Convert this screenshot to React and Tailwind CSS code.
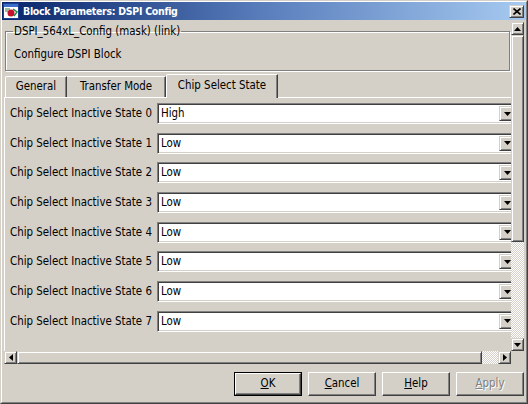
import React from "react";

const rows = ["High", "Low", "Low", "Low", "Low", "Low", "Low", "Low"];

function DownArrow() {
  return (
    <svg width="7" height="4" viewBox="0 0 7 4" className="block">
      <path d="M0 0h7L3.5 4z" fill="#000" />
    </svg>
  );
}
function UpArrow() {
  return (
    <svg width="7" height="4" viewBox="0 0 7 4" className="block">
      <path d="M0 4h7L3.5 0z" fill="#000" />
    </svg>
  );
}
function LeftArrow() {
  return (
    <svg width="4" height="7" viewBox="0 0 4 7" className="block">
      <path d="M4 0v7L0 3.5z" fill="#000" />
    </svg>
  );
}
function RightArrow() {
  return (
    <svg width="4" height="7" viewBox="0 0 4 7" className="block">
      <path d="M0 0v7L4 3.5z" fill="#000" />
    </svg>
  );
}

function ArrowBtn({ children, className = "" }) {
  return (
    <div
      className={
        "flex items-center justify-center bg-[#d4d0c8] border border-t-[#d4d0c8] border-l-[#d4d0c8] border-r-[#404040] border-b-[#404040] shadow-[inset_1px_1px_0_#ffffff,inset_-1px_-1px_0_#808080] " +
        className
      }
    >
      {children}
    </div>
  );
}

function Row({ label, value }) {
  return (
    <div className="flex items-center h-[21px]">
      <div className="w-[147px] shrink-0 whitespace-nowrap">{label}</div>
      <div className="flex-1 h-[21px] flex bg-white border border-t-[#808080] border-l-[#808080] border-b-white border-r-white shadow-[inset_1px_1px_0_#404040,inset_-1px_-1px_0_#d4d0c8] p-[2px]">
        <div className="flex-1 pl-[1px] leading-[15px]">{value}</div>
        <ArrowBtn className="w-[16px] h-[15px]">
          <DownArrow />
        </ArrowBtn>
      </div>
    </div>
  );
}

function Button({ children, def, disabled }) {
  return (
    <div className={"w-[68px] h-[24px] " + (def ? "border border-black" : "")}>
      <div
        className={
          "w-full h-full flex items-center justify-center bg-[#d4d0c8] border border-t-white border-l-white border-r-[#404040] border-b-[#404040] shadow-[inset_-1px_-1px_0_#808080] " +
          (disabled ? "text-[#808080] [text-shadow:1px_1px_0_#ffffff]" : "text-black")
        }
      >
        {children}
      </div>
    </div>
  );
}

export default function App() {
  return (
    <div className="w-[528px] h-[404px] bg-[#d4d0c8] border border-t-[#d4d0c8] border-l-[#d4d0c8] border-b-[#404040] border-r-[#404040] font-['DejaVu_Sans_Condensed','DejaVu_Sans',sans-serif] text-[11.4px] text-black overflow-hidden">
      <div className="h-full border border-t-white border-l-white border-b-[#808080] border-r-[#808080] flex flex-col">
        {/* Title bar */}
        <div className="h-[18px] flex items-center bg-gradient-to-r from-[#0a246a] via-[#5a7ebc] to-[#a6caf0]">
          <svg width="16" height="16" viewBox="0 0 16 16" className="ml-[1px] shrink-0">
            <rect x="0.5" y="0.5" width="15" height="15" fill="#ffffff" stroke="#1c3f94" />
            <rect x="1" y="1" width="14" height="3" fill="#3a6ec8" />
            <path d="M2 6h5M2 8h3" stroke="#2f7d3a" strokeWidth="1" />
            <circle cx="8" cy="10" r="3.5" fill="#c8102e" />
            <path d="M10 6l4 3-3 4" stroke="#1f8f3a" strokeWidth="1.5" fill="none" />
          </svg>
          <div className="ml-[4px] flex-1 text-white font-bold text-[10.5px] tracking-[-0.3px] whitespace-nowrap leading-[18px]">
            Block Parameters: DSPI Config
          </div>
          <ArrowBtn className="w-[15px] h-[13px] mr-[2px]">
            <svg width="8" height="7" viewBox="0 0 8 7" className="block">
              <path d="M0.5 0.5l7 6M7.5 0.5l-7 6" stroke="#000" strokeWidth="1.6" />
            </svg>
          </ArrowBtn>
        </div>

        {/* Content */}
        <div className="mx-[2px] mt-[1px] flex flex-col h-[343px]">
          <div className="flex h-[330px]">
            {/* viewport */}
            <div className="w-[507px] h-full overflow-hidden">
              <fieldset className="ml-[1px] mr-[1px] mt-[3px] border border-[#808080] shadow-[inset_1px_1px_0_#ffffff,1px_1px_0_#ffffff] h-[47px] px-0 pb-0">
                <legend className="ml-[7px] px-[1px] leading-[14px]">DSPI_564xL_Config (mask) (link)</legend>
                <div className="pl-[8px] pt-[9px] leading-[14px]">Configure DSPI Block</div>
              </fieldset>

              {/* tabs */}
              <div className="mt-[2px] ml-[1px] flex items-end h-[24px]">
                <div className="h-[21px] w-[62px] flex items-center justify-center border-t border-l border-t-white border-l-white border-r border-r-[#404040] shadow-[inset_-1px_0_0_#808080] rounded-tl-[2px] pb-[1px]">
                  General
                </div>
                <div className="h-[21px] w-[99px] flex items-center justify-center border-t border-t-white border-r border-r-[#404040] shadow-[inset_-1px_0_0_#808080] pb-[1px]">
                  Transfer Mode
                </div>
                <div className="h-[24px] w-[112px] -mb-[1px] relative z-10 bg-[#d4d0c8] flex items-center justify-center border-t border-l border-t-white border-l-white border-r border-r-[#404040] shadow-[inset_-1px_0_0_#808080] rounded-tl-[2px] pb-[2px]">
                  Chip Select State
                </div>
              </div>
              {/* panel */}
              <div className="w-[516px] h-[260px] border-t border-l border-t-white border-l-white pl-[5px] pr-[2px] pt-[5px] flex flex-col gap-[8.7px]">
                {rows.map((v, i) => (
                  <Row key={i} label={`Chip Select Inactive State ${i}`} value={v} />
                ))}
              </div>
            </div>
            {/* vertical scrollbar */}
            <div className="w-[13px] h-full flex flex-col pt-[1px]">
              <ArrowBtn className="h-[13px] w-[13px]">
                <UpArrow />
              </ArrowBtn>
              <ArrowBtn className="h-[207px] w-[13px]" />
              <div className="flex-1 bg-[repeating-conic-gradient(#ffffff_0%_25%,#d4d0c8_0%_50%)] bg-[length:2px_2px]" />
              <ArrowBtn className="h-[13px] w-[13px]">
                <DownArrow />
              </ArrowBtn>
            </div>
          </div>
          <div className="flex h-[13px]">
            <div className="w-[507px] flex">
              <ArrowBtn className="h-[13px] w-[13px]">
                <LeftArrow />
              </ArrowBtn>
              <ArrowBtn className="h-[13px] w-[465px]" />
              <div className="flex-1 bg-[repeating-conic-gradient(#ffffff_0%_25%,#d4d0c8_0%_50%)] bg-[length:2px_2px]" />
              <ArrowBtn className="h-[13px] w-[13px]">
                <RightArrow />
              </ArrowBtn>
            </div>
            <div className="w-[13px]" />
          </div>
        </div>

        {/* buttons */}
        <div className="flex-1 flex items-start justify-end pt-[8px] pr-[2px] gap-[6px]">
          <Button def>
            <span><span className="underline">O</span>K</span>
          </Button>
          <Button>
            <span><span className="underline">C</span>ancel</span>
          </Button>
          <Button>
            <span><span className="underline">H</span>elp</span>
          </Button>
          <Button disabled>
            <span><span className="underline">A</span>pply</span>
          </Button>
        </div>
      </div>
    </div>
  );
}
